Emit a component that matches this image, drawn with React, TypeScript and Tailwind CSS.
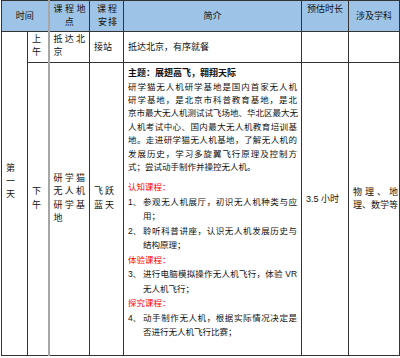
const intro = [
  '研学猫无人机研学基地是国内首家无人机',
  '研学基地，是北京市科普教育基地，是北',
  '京市最大无人机测试试飞场地、华北区最大无',
  '人机考试中心、国内最大无人机教育培训基',
  '地。走进研学猫无人机基地，了解无人机的',
  '发展历史，学习多旋翼飞行原理及控制方',
];

const sections = [
  {
    title: '认知课程：',
    items: [
      { no: '1、', first: '参观无人机展厅，初识无人机种类与应', rest: '用；' },
      { no: '2、', first: '聆听科普讲座，认识无人机发展历史与', rest: '结构原理；' },
    ],
  },
  {
    title: '体验课程：',
    items: [{ no: '3、', first: '进行电脑模拟操作无人机飞行，体验 VR', rest: '无人机飞行；' }],
  },
  {
    title: '探究课程：',
    items: [{ no: '4、', first: '动手制作无人机，根据实际情况决定是', rest: '否进行无人机飞行比赛；' }],
  },
];

function Justified({ children }: { children: React.ReactNode }) {
  return <div className="whitespace-nowrap text-justify [text-align-last:justify]">{children}</div>;
}

export default function App() {
  const cell = 'border border-[#333] p-0 align-middle';
  return (
    <div
      className="h-[358px] w-[400px] overflow-hidden bg-white text-[8.5px] text-[#111]"
      style={{ fontFamily: '"Liberation Sans", "Noto Sans CJK SC", sans-serif' }}
    >
      <table className="ml-[1px] w-[398px] table-fixed border-collapse border border-[#444]">
        <colgroup>
          <col className="w-[26px]" />
          <col className="w-[21px]" />
          <col className="w-[41px]" />
          <col className="w-[34px]" />
          <col className="w-[178px]" />
          <col className="w-[47px]" />
          <col className="w-[51px]" />
        </colgroup>
        <thead>
          <tr className="h-[31px] bg-[#9dc3e6] text-[9px] leading-[13px]">
            <th colSpan={2} className={`${cell} text-center font-normal`}>
              时间
            </th>
            <th className={`${cell} border-l-2 border-l-[#a6a6a6] text-center font-normal`}>
              <div className="pl-[3px] tracking-[2.5px]">课程地</div>
              <div>点</div>
            </th>
            <th className={`${cell} text-center font-normal`}>
              <div className="pl-[3px] tracking-[2px]">课程</div>
              <div className="pl-[3px] tracking-[1px]">安排</div>
            </th>
            <th className={`${cell} text-center font-normal`}>简介</th>
            <th className={`${cell} pt-[2px] text-center align-top font-normal`}>预估时长</th>
            <th className={`${cell} text-center font-normal`}>涉及学科</th>
          </tr>
        </thead>
        <tbody>
          <tr className="h-[31px] text-[9px] leading-[13px]">
            <td rowSpan={2} className={`${cell} px-[4px] pb-[25px]`}>
              <div>第</div>
              <div>一</div>
              <div>天</div>
            </td>
            <td className={`${cell} px-[4px] pb-[2px]`}>
              <div>上</div>
              <div>午</div>
            </td>
            <td className={`${cell} border-l-2 border-l-[#a6a6a6] px-[4px] pb-[2px]`}>
              <Justified>抵达北</Justified>
              <div>京</div>
            </td>
            <td className={`${cell} px-[4px]`}>接站</td>
            <td className={`${cell} px-[4px]`}>抵达北京，有序就餐</td>
            <td className={cell}></td>
            <td className={cell}></td>
          </tr>
          <tr className="h-[293px] text-[9px] leading-[13.5px]">
            <td className={`${cell} px-[4px] pb-[21px]`}>
              <div>下</div>
              <div>午</div>
            </td>
            <td className={`${cell} border-l-2 border-l-[#a6a6a6] px-[4px] pb-[21px]`}>
              <Justified>研学猫</Justified>
              <Justified>无人机</Justified>
              <Justified>研学基</Justified>
              <div>地</div>
            </td>
            <td className={`${cell} px-[4px] pb-[21px]`}>
              <div className="tracking-[2px]">飞跃</div>
              <div className="tracking-[2px]">蓝天</div>
            </td>
            <td className={`${cell} px-[4px] pt-[4px] align-top text-[8.5px]`}>
              <div className="text-[9px] leading-[13.5px] font-bold">主题：展翅高飞，翱翔天际</div>
              <div className="leading-[13.4px]">
                {intro.map((line) => (
                  <Justified key={line}>{line}</Justified>
                ))}
                <div>式；尝试动手制作并操控无人机。</div>
              </div>
              <div className="mt-[6px] leading-[14.5px]">
                {sections.map((s) => (
                  <div key={s.title}>
                    <div className="text-[#ff0000]">{s.title}</div>
                    {s.items.map((it) => (
                      <div key={it.no} className="flex">
                        <span className="w-[15px] shrink-0">{it.no}</span>
                        <div className="min-w-0 flex-1">
                          <Justified>{it.first}</Justified>
                          <div>{it.rest}</div>
                        </div>
                      </div>
                    ))}
                  </div>
                ))}
              </div>
            </td>
            <td className={`${cell} px-[4px] pb-[18px] whitespace-nowrap`}>3.5 小时</td>
            <td className={`${cell} pl-[4px] pr-[1px] pb-[21px] leading-[13px] whitespace-nowrap`}>
              <Justified>物理、地</Justified>
              <div>理、数学等</div>
            </td>
          </tr>
        </tbody>
      </table>
    </div>
  );
}
